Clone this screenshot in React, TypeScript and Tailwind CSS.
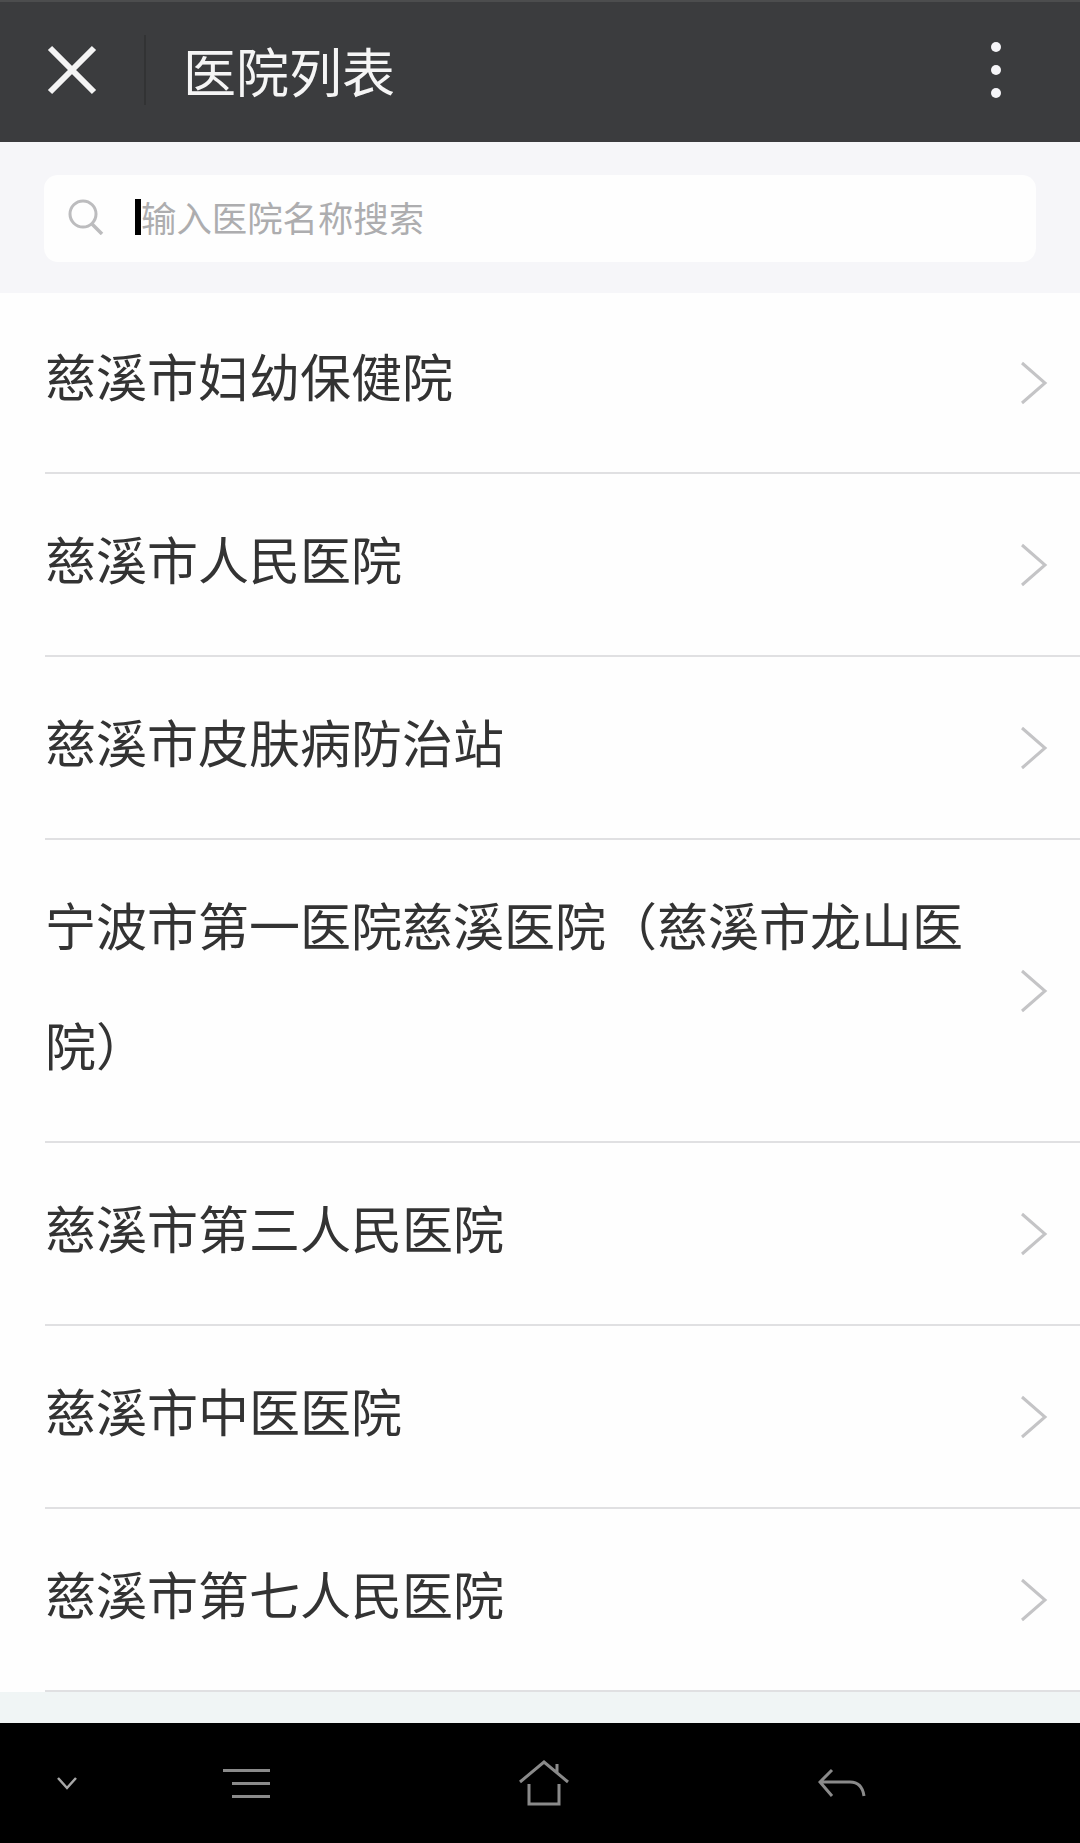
import type React from 'react'

const hospitals = [
  '慈溪市妇幼保健院',
  '慈溪市人民医院',
  '慈溪市皮肤病防治站',
  '宁波市第一医院慈溪医院（慈溪市龙山医院）',
  '慈溪市第三人民医院',
  '慈溪市中医医院',
  '慈溪市第七人民医院'
]

function HospitalRow({ name }: { name: string }): React.JSX.Element {
  return (
    <div className="flex items-center ml-[45px] border-b-2 border-[#e0e0e2] pr-[32px] [&:first-child>div]:pt-[22px]">
      <div className="flex-1 pt-[24px] pb-[37px] pr-[50px] text-[51px] leading-[120px] text-[#333333]">
        {name}
      </div>
      <svg width="28" height="44" viewBox="0 0 28 44" fill="none" className="shrink-0">
        <path d="M2 2 L25 22 L2 42" stroke="#c4c4c6" strokeWidth="3" />
      </svg>
    </div>
  )
}

export default function App(): React.JSX.Element {
  return (
    <div className="flex flex-col w-[1080px] h-[1843px] overflow-hidden bg-[#f0f5f5] font-['Noto_Sans_CJK_SC','Noto_Sans',sans-serif]">
      {/* Title bar */}
      <div className="flex items-center h-[142px] shrink-0 bg-[#3b3c3e] border-t-2 border-[#4c4d4e] pb-[4px]">
        <div className="flex items-center justify-center w-[146px] h-[70px] border-r-2 border-[#323334]">
          <svg width="50" height="50" viewBox="0 0 50 50" fill="none">
            <path d="M3 3 L47 47 M47 3 L3 47" stroke="#f4f4f4" strokeWidth="6" />
          </svg>
        </div>
        <div className="flex-1 ml-[37px] text-[53px] leading-none text-[#f5f5f5]">医院列表</div>
        <div className="flex flex-col items-center gap-[13px] mr-[79px]">
          <div className="w-[10px] h-[10px] rounded-full bg-[#f5f5f8]" />
          <div className="w-[10px] h-[10px] rounded-full bg-[#f5f5f8]" />
          <div className="w-[10px] h-[10px] rounded-full bg-[#f5f5f8]" />
        </div>
      </div>

      {/* Search */}
      <div className="shrink-0 h-[151px] pt-[33px] px-[44px] bg-[#f6f6f9]">
        <div className="flex items-center h-[87px] rounded-[14px] bg-[#fefefe] pl-[24px] pb-[4px]">
          <svg width="36" height="36" viewBox="0 0 36 36" fill="none" className="shrink-0">
            <circle cx="15" cy="15" r="13" stroke="#bcbcbe" strokeWidth="3" />
            <path d="M24 25 L34 35" stroke="#bcbcbe" strokeWidth="3.5" />
          </svg>
          <div className="w-[6px] h-[36px] ml-[31px] bg-black shrink-0" />
          <div className="text-[35.4px] leading-none text-[#adadaf]">输入医院名称搜索</div>
        </div>
      </div>

      {/* List */}
      <div className="shrink-0 bg-[#fefefe]">
        {hospitals.map((name) => (
          <HospitalRow key={name} name={name} />
        ))}
      </div>

      <div className="flex-1" />

      {/* Device nav bar */}
      <div className="flex items-center shrink-0 h-[120px] bg-black">
        <svg width="22" height="14" viewBox="0 0 22 14" fill="none" className="ml-[56px]">
          <path d="M2 2 L11 12 L20 2" stroke="#a8a8a8" strokeWidth="2.5" />
        </svg>
        <div className="flex flex-col gap-[10px] ml-[145px] items-end">
          <div className="w-[47px] h-[3px] bg-[#8a8a8a]" />
          <div className="w-[38px] h-[3px] bg-[#8a8a8a]" />
          <div className="w-[38px] h-[3px] bg-[#8a8a8a]" />
        </div>
        <svg width="50" height="46" viewBox="0 0 50 46" fill="none" className="ml-[249px]">
          <path d="M1 22 L25 2 L49 22 M38 4 V13 M10 24 V44 H40 V24" stroke="#8a8a8a" strokeWidth="3" />
        </svg>
        <svg width="48" height="30" viewBox="0 0 48 30" fill="none" className="ml-[249px]">
          <path d="M14 2 L2 14 L14 28 M2 14 H32 Q44 14 46 28" stroke="#8a8a8a" strokeWidth="3" />
        </svg>
      </div>
    </div>
  )
}
